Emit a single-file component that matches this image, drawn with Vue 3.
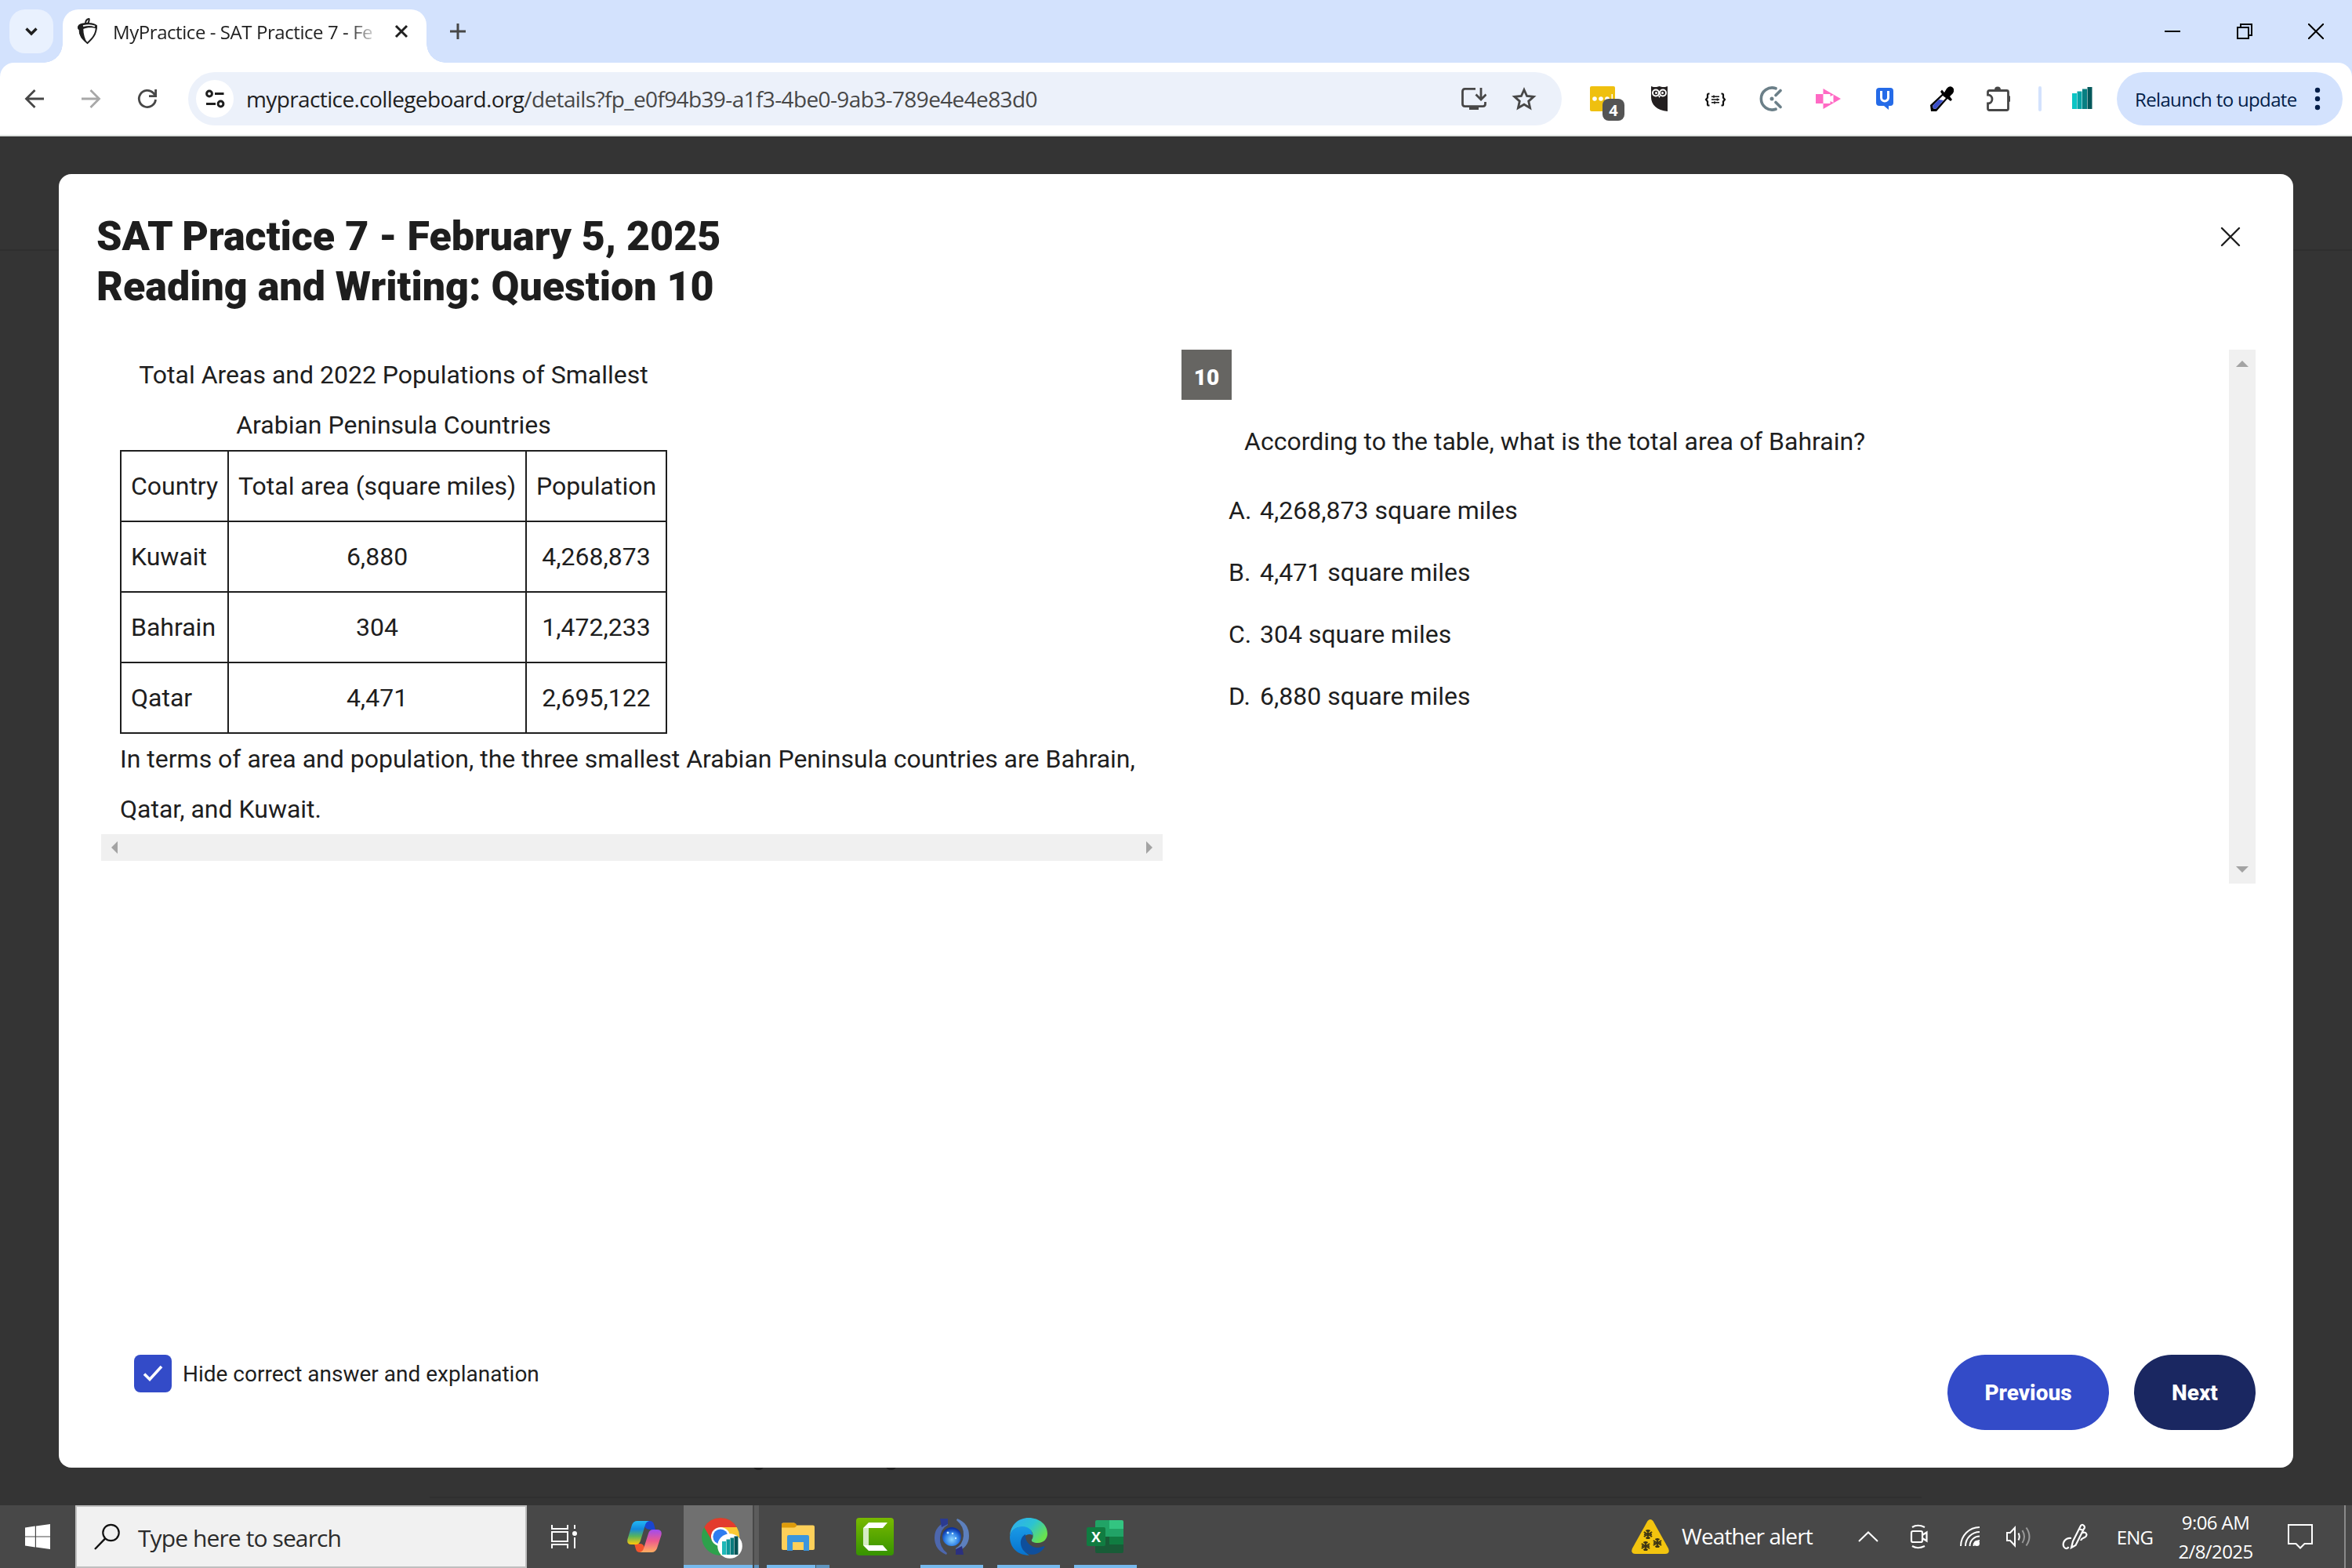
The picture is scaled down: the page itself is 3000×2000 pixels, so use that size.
<script setup>
const rows = [
  ['Country', 'Total area (square miles)', 'Population'],
  ['Kuwait', '6,880', '4,268,873'],
  ['Bahrain', '304', '1,472,233'],
  ['Qatar', '4,471', '2,695,122'],
]
const options = [
  ['A.', '4,268,873 square miles'],
  ['B.', '4,471 square miles'],
  ['C.', '304 square miles'],
  ['D.', '6,880 square miles'],
]
</script>

<template>
  <div class="screen">
    <header class="tabstrip">
      <button class="tab-search">
        <svg width="20" height="20" viewBox="0 0 20 20"><path d="M3.5 6.5 10 13l6.500-6.500" fill="none" stroke="#1f1f1f" stroke-width="3.400" /></svg>
      </button>
      <div class="tab">
        <svg class="favicon" width="28" height="34" viewBox="0 0 28 34">
          <path d="M11.500 7.500C10.500 4 12.500 1.500 15.500 1c1 2.500-.5 4.500-2 6.800M3.500 14.500c0 9 4.500 12.500 10 17.500 6-5.500 11.500-11 11.500-22-3.500-3.400-17.500-4.200-22-.5-2 3-.5 4.500.5 5z" fill="none" stroke="#1e1e1e" stroke-width="2" />
          <path d="M2 9.500c5-4 17-4 23 0 1 2 1 3 .3 4.200-6-2.200-13-1.500-17 .3 0 6.500 2 12.500 4.600 17.500C6 26.500 3 22 3 15 .8 13.500.8 11.500 2 9.500z" fill="#1e1e1e" />
          <path d="M8 10.200c5-1.400 11-1.300 15 .4" fill="none" stroke="#fff" stroke-width="1.800" />
        </svg>
        <span class="tab-title">MyPractice - SAT Practice 7 - Fe</span>
        <svg class="tab-close" width="20" height="20" viewBox="0 0 20 20"><path d="m3 3 14 14M17 3 3 17" stroke="#1f1f1f" stroke-width="3" /></svg>
      </div>
      <svg class="new-tab" width="20" height="20" viewBox="0 0 20 20"><path d="M10 0v20M0 10h20" stroke="#474747" stroke-width="3" /></svg>
      <div class="win-controls">
        <span><svg width="20" height="20" viewBox="0 0 20 20"><path d="M0 10h20" stroke="#000" stroke-width="2" /></svg></span>
        <span><svg width="20" height="20" viewBox="0 0 20 20"><path d="M1 5h14v14H1zM5 5V1h14v14h-4" fill="none" stroke="#000" stroke-width="2" /></svg></span>
        <span><svg width="20" height="20" viewBox="0 0 20 20"><path d="m0 0 20 20M20 0 0 20" stroke="#000" stroke-width="2" /></svg></span>
      </div>
    </header>

    <div class="toolbar-wrap">
      <div class="toolbar">
        <nav class="nav-buttons">
          <svg width="32" height="32" viewBox="0 0 32 32"><path d="M28 16H6M16.500 5 5.500 16l11 11" fill="none" stroke="#474747" stroke-width="2.800" /></svg>
          <svg width="32" height="32" viewBox="0 0 32 32"><path d="M4 16h22M15.500 5l11 11-11 11" fill="none" stroke="#a8a8a8" stroke-width="2.800" /></svg>
          <svg width="32" height="32" viewBox="0 0 32 32"><path d="M26.500 17A10.600 10.600 0 1 1 23.500 8.500l3 3.500" fill="none" stroke="#474747" stroke-width="2.800" /><path d="M26.600 4v8.600H18" fill="none" stroke="#474747" stroke-width="2.800" /></svg>
        </nav>
        <div class="omnibox">
          <span class="site-info">
            <svg width="28" height="26" viewBox="0 0 28 26"><g fill="none" stroke="#1f1f1f" stroke-width="3"><circle cx="7" cy="6.500" r="3.400" /><circle cx="21.500" cy="19.500" r="3.400" /><path d="M14 6.500h11.500M3 19.500h12" /></g></svg>
          </span>
          <span class="url"><b>mypractice.collegeboard.org</b>/details?fp_e0f94b39-a1f3-4be0-9ab3-789e4e4e83d0</span>
          <svg width="32" height="32" viewBox="0 0 32 32"><path d="M18 3.400H4.500c-2 0-3 1-3 3v16.200c0 2 1 3 3 3h23c2 0 3-1 3-3V20M25 2v14M18.500 10.500 25 17l6.500-6.500" fill="none" stroke="#474747" stroke-width="2.800" /><path d="M10 25h12v5H10z" fill="#474747" /></svg>
          <svg class="star" width="32" height="32" viewBox="0 0 32 32"><path d="m16 4.500 3.600 8 8.600.8-6.500 5.800 1.900 8.500L16 23.200l-7.600 4.400 1.900-8.500-6.500-5.800 8.600-.8z" fill="none" stroke="#474747" stroke-width="2.800" /></svg>
        </div>
        <div class="extensions">
          <span class="notes">
            <svg width="32" height="32" viewBox="0 0 32 32"><path d="M2 0h28a2 2 0 0 1 2 2v18L20 32H2a2 2 0 0 1-2-2V2a2 2 0 0 1 2-2z" fill="#efc00f" /><g fill="#fff"><circle cx="6" cy="16" r="2.800" /><circle cx="14" cy="16" r="2.800" /><circle cx="22" cy="16" r="2.800" /><path d="M27.500 10h1.500v10h-1.500z" /></g></svg>
            <em>4</em>
          </span>
          <svg width="32" height="32" viewBox="0 0 32 32"><path d="M6 0l3 1h4l3.500-1L20 1h4l3-1v32C13 31 6 23 6 14z" fill="#231f20" /><g fill="#231f20" stroke="#fff" stroke-width="2"><circle cx="12" cy="8.500" r="4" /><circle cx="21" cy="8.500" r="4" /></g><g fill="#fff"><circle cx="12.500" cy="8.500" r="1.500" /><circle cx="20.500" cy="8.500" r="1.500" /><path d="m15 12 1.500 3 1.500-3z" /></g></svg>
          <svg width="32" height="32" viewBox="0 0 32 32"><path d="M8.500 9.500H7.500Q6 9.500 6 11v3.500L4 17l2 2.500V23q0 1.500 1.500 1.500h1M23.500 9.500h1q1.500 0 1.500 1.500v3.500l2 2.500-2 2.500V23q0 1.500-1.500 1.500h-1" fill="none" stroke="#111" stroke-width="2.200" /><path d="M11 13.200h10M11 17h10M11 20.800h10M14 11.600v3.200M18.500 15.400v3.200M15 19.200v3.200" fill="none" stroke="#111" stroke-width="1.500" /></svg>
          <svg width="32" height="32" viewBox="0 0 32 32"><g fill="none" stroke="#6b7f88" stroke-width="3.600" stroke-linecap="round"><path d="M21 2.800A14 14 0 1 0 21 29.200M21 11.500l6-6M21 20.500l6 6" /></g><circle cx="16" cy="16" r="2.500" fill="#6b7f88" /></svg>
          <svg width="32" height="32" viewBox="0 0 32 32"><path d="M0 10h9.500V3L32 16 9.500 29v-7H0z" fill="#ff69c4" /><path d="M9.500 10h9v3l4-2v10l-4-2v3h-9z" fill="#fff" /></svg>
          <svg width="32" height="32" viewBox="0 0 32 32"><path d="M9 2h14q4 0 4 4v15q0 4-4 4h-2v5l-6-5H9q-4 0-4-4V6q0-4 4-4z" fill="#256be8" /><path d="M11.500 6v8.500a4.500 4.500 0 0 0 9 0V6" fill="none" stroke="#fff" stroke-width="3" /></svg>
          <svg width="32" height="32" viewBox="0 0 32 32"><path d="M17 4.500 20 8l3-5q3-4 7-2 4 3 1 8l-4 4 3 4-2 2-4-3-14 16H3l-1-8L17 10l-2-3z" fill="#000" /><path d="m18 12 4 3L9 29l-3-.5L5 25z" fill="#fff" /><path d="m13 17 6 1L9 29l-3-.5L5 25z" fill="#3b4fc9" /></svg>
          <svg width="32" height="32" viewBox="0 0 32 32"><path d="M12 6V4.500a4 4 0 0 1 8 0V6h-8zM29 12h.5a4 4 0 0 1 0 8H29z" fill="#474747" /><path d="M5.500 5.500h22q2 0 2 2v21q0 2-2 2h-22q-2 0-2-2v-6.500a5.500 5.500 0 0 0 0-11V7.500q0-2 2-2z" fill="none" stroke="#474747" stroke-width="2.800" /></svg>
        </div>
        <i class="divider"></i>
        <svg class="bars" width="32" height="32" viewBox="0 0 32 32"><path d="M3 9h6v20H3z" fill="#0cc5c5" /><path d="M9.500 6.500h6V29h-6z" fill="#08a3a6" /><path d="M16 3.500h6V29h-6z" fill="#077f82" /><path d="M22.500 1h6v28h-6z" fill="#05585b" /></svg>
        <button class="relaunch">
          <span>Relaunch to update</span>
          <svg width="8" height="30" viewBox="0 0 8 30"><g fill="#041e49"><circle cx="4" cy="4" r="3.200" /><circle cx="4" cy="15" r="3.200" /><circle cx="4" cy="26" r="3.200" /></g></svg>
        </button>
      </div>
    </div>

    <main class="page">
      <i class="rule rule-top"></i>
      <i class="rule rule-bottom"></i>
      <section class="modal">
        <header class="modal-head">
          <h1>SAT Practice 7 - February 5, 2025<br />Reading and Writing: Question 10</h1>
          <svg width="26" height="26" viewBox="0 0 26 26"><path d="m2 2 22 22M24 2 2 24" stroke="#1e1e1e" stroke-width="2.400" stroke-linecap="round" /></svg>
        </header>
        <div class="columns">
          <div class="passage">
            <div class="passage-body">
              <table>
                <caption>Total Areas and 2022 Populations of Smallest<br />Arabian Peninsula Countries</caption>
                <colgroup><col class="c1" /><col class="c2" /><col class="c3" /></colgroup>
                <tbody>
                  <tr v-for="r in rows" :key="r[0]"><td v-for="c in r" :key="c">{{ c }}</td></tr>
                </tbody>
              </table>
              <p>In terms of area and population, the three smallest Arabian Peninsula countries are Bahrain, Qatar, and Kuwait.</p>
            </div>
            <div class="hscroll">
              <svg width="8" height="16" viewBox="0 0 8 16"><path d="M8 0v16L0 8z" fill="#a3a3a3" /></svg>
              <svg width="8" height="16" viewBox="0 0 8 16"><path d="M0 0v16l8-8z" fill="#a3a3a3" /></svg>
            </div>
          </div>
          <div class="question">
            <div class="question-body">
              <span class="number">10</span>
              <p class="stem">According to the table, what is the total area of Bahrain?</p>
              <ol>
                <li v-for="o in options" :key="o[0]"><span>{{ o[0] }}</span>{{ o[1] }}</li>
              </ol>
            </div>
            <div class="vscroll">
              <svg width="16" height="8" viewBox="0 0 16 8"><path d="M0 8h16L8 0z" fill="#a3a3a3" /></svg>
              <svg width="16" height="8" viewBox="0 0 16 8"><path d="M0 0h16L8 8z" fill="#a3a3a3" /></svg>
            </div>
          </div>
        </div>
        <footer class="modal-foot">
          <label class="hide-answer">
            <span class="checkbox"><svg width="28" height="24" viewBox="0 0 28 24"><path d="m3 12.500 7 7L25 3" fill="none" stroke="#fff" stroke-width="3.600" /></svg></span>
            Hide correct answer and explanation
          </label>
          <div class="actions">
            <button class="btn prev">Previous</button>
            <button class="btn next">Next</button>
          </div>
        </footer>
      </section>
      <i class="peek peek-a"></i>
      <i class="peek peek-b"></i>
    </main>

    <footer class="taskbar">
      <div class="start">
        <svg width="32" height="32" viewBox="0 0 32 32"><path d="M0 4.500 12.800 2.600v12.800H0zM14 2.400 32 0v15.400H14zM0 16.600h12.800v12.800L0 27.500zM14 16.600h18V32l-18-2.400z" fill="#fff" /></svg>
      </div>
      <div class="search">
        <svg width="34" height="34" viewBox="0 0 34 34"><circle cx="21.500" cy="12" r="10.200" fill="none" stroke="#111" stroke-width="2.200" /><path d="M14.200 19.400 1 33" stroke="#111" stroke-width="2.400" /></svg>
        <span>Type here to search</span>
      </div>
      <div class="app taskview">
        <svg width="34" height="32" viewBox="0 0 34 32"><path d="M1 1v5h20V1M1 31v-5h20v5M1 10h20v12H1zM30 1v5M30 17v14" fill="none" stroke="#fff" stroke-width="2" /><circle cx="30" cy="12" r="3" fill="#fff" /></svg>
      </div>
      <div class="app copilot">
        <svg width="44" height="42" viewBox="0 0 44 42">
          <defs>
            <linearGradient id="cpA" x1="0" y1="0" x2="0" y2="1"><stop offset="0" stop-color="#22b8f5" /><stop offset=".35" stop-color="#1489dc" /><stop offset=".65" stop-color="#58b45c" /><stop offset="1" stop-color="#ffc80a" /></linearGradient>
            <linearGradient id="cpB" x1="0" y1="0" x2="0" y2="1"><stop offset="0" stop-color="#a04cf0" /><stop offset=".5" stop-color="#ee5a8c" /><stop offset="1" stop-color="#ffaf60" /></linearGradient>
          </defs>
          <path d="M22 1h7q3.500 0 5 4l2 7h-6q-6 0-8-4z" fill="#1a45cf" />
          <path d="M22 41h-6q-4 0-5-4l-2-7h7q5 0 6 5z" fill="#f2552c" />
          <path d="M13 1h15q-4 1-5 5l-6 20q-1.500 5-6 5H5q-6 0-4.500-7L6 6q2-5 7-5z" fill="url(#cpA)" />
          <path d="M31 41H16q4-1 5-5l6-19q1.500-5 6-5h5q7 0 5.500 7L38 36q-2 5-7 5z" fill="url(#cpB)" />
        </svg>
      </div>
      <div class="app chrome running">
        <svg width="54" height="54" viewBox="0 0 54 54">
          <circle cx="25" cy="25" r="24" fill="#2da14c" />
          <path d="M4.200 13A24 24 0 0 1 45.800 13H25L14.600 31z" fill="#e33b2e" />
          <path d="M45.800 13A24 24 0 0 1 25 49l10.400-18L25 13z" fill="#fcc934" />
          <circle cx="25" cy="25" r="12" fill="#fff" /><circle cx="25" cy="25" r="9.600" fill="#2f7df0" />
          <circle cx="37" cy="37" r="15.800" fill="#fff" />
          <path d="M27 31h5v17h-5z" fill="#1fb8b8" /><path d="M32.500 28.500h4.500V48h-4.500z" fill="#0d9a9c" /><path d="M37.500 26.500h4.500V48h-4.500z" fill="#0a7a7d" /><path d="M42.500 24.500h5V48h-5z" fill="#075457" />
        </svg>
      </div>
      <i class="stack"></i>
      <div class="app explorer running">
        <svg width="44" height="36" viewBox="0 0 44 36"><path d="M1 2q0-1.500 2-1.500h14l3 3H41q2 0 2 2V33q0 2-2 2H3q-2 0-2-2z" fill="#fdd05a" /><path d="M3 .5h14q3 .5 3 3t-4 3H1V2q0-1.500 2-1.500z" fill="#de9b0b" /><path d="M8 36V18q0-2 2-2h24q2 0 2 2v18h-7V25H15v11z" fill="#3b96dd" /></svg>
      </div>
      <div class="app camtasia">
        <svg width="48" height="48" viewBox="0 0 48 48"><defs><linearGradient id="cam" x1="0" y1="0" x2="0" y2="1"><stop offset="0" stop-color="#78b900" /><stop offset="1" stop-color="#369300" /></linearGradient></defs><rect width="48" height="48" rx="4" fill="url(#cam)" /><path d="m9 13 7-7h24l-6 7H16v22h18l6 7H16l-7-7z" fill="#fff" /><path d="m9 13 7 0v22H9z" fill="#d6ecc4" /></svg>
      </div>
      <div class="app sync running">
        <svg width="48" height="48" viewBox="0 0 48 48"><defs><radialGradient id="orb" cx=".5" cy=".65" r=".6"><stop offset="0" stop-color="#8fd8ff" /><stop offset=".6" stop-color="#2f80e6" /><stop offset="1" stop-color="#0b2fa0" /></radialGradient></defs><circle cx="24" cy="24" r="12" fill="url(#orb)" /><path d="M19 4Q2 10 2 25q0 16 15 22l1-2Q8 37 9 25 10 14 19 9z" fill="#4d67ad" /><path d="M29 44q17-6 17-21Q46 7 31 1l-1 2q10 8 9 20-1 11-10 16z" fill="#5d80bd" /><path d="M9 1h10v7l-8 4z" fill="#2b3a90" /><path d="M39 47H29v-7l8-4z" fill="#2b3080" /><circle cx="19" cy="19" r="1.500" fill="#c8ecff" /><circle cx="25" cy="20" r="1.300" fill="#c8ecff" /><circle cx="29" cy="26" r="1.200" fill="#c8ecff" /></svg>
      </div>
      <div class="app edge running">
        <svg width="48" height="48" viewBox="0 0 48 48">
          <defs>
            <linearGradient id="ed1" x1="0" y1="0" x2="1" y2=".6"><stop offset="0" stop-color="#2fa8f5" /><stop offset=".55" stop-color="#2cc3d2" /><stop offset="1" stop-color="#69e24e" /></linearGradient>
            <linearGradient id="ed2" x1="0" y1="0" x2="0" y2="1"><stop offset="0" stop-color="#1a9be6" /><stop offset="1" stop-color="#0572cf" /></linearGradient>
          </defs>
          <path d="M0 23C1 9 11 0 24 0c14 0 24 9 24 20 0 7-5 12-12 12-6 0-9-2-8-4 4-5 1-15-10-16C8 11 2 16 0 23z" fill="url(#ed1)" />
          <path d="M0 24c1-8 8-13 16-13 9 0 13 6 13 11-6-3-14 2-14 10 0 7 4 12 10 15.800C10 48 0 38 0 24z" fill="url(#ed2)" />
          <path d="M20 21c-8 4-8 16-1 22 8 7 19 4 25-5 1-1.500 0-2-1.500-1.400C32 41 19 34 20 21z" fill="#0f4f9c" />
        </svg>
      </div>
      <div class="app excel running">
        <svg width="48" height="44" viewBox="0 0 48 44"><path d="M11 3q0-2 2-2h16v21H11z" fill="#21a366" /><path d="M29 1h16q2 0 2 2v9H29z" fill="#33c481" /><path d="M29 12h18v10H29z" fill="#21a366" /><path d="M11 22h18v10H11z" fill="#185c37" /><path d="M29 22h18v10H29z" fill="#107c41" /><path d="M11 32h36v9q0 2-2 2H13q-2 0-2-2z" fill="#185c37" /><rect y="10" width="24" height="24" rx="2" fill="#107c41" /><text x="12" y="28.500" text-anchor="middle" font-family="Open Sans, sans-serif" font-weight="700" font-size="18" fill="#fff">X</text></svg>
      </div>

      <div class="tray">
        <svg class="alert" width="48" height="46" viewBox="0 0 48 46">
          <path d="M20.500 3q3.500-4 7 0L47 38q2.500 7-4 7H5q-6.500 0-4-7z" fill="#f2c40f" />
          <g stroke="#3c3414" stroke-width="1.800">
            <path id="flake" d="M21 14v12M15.800 17l10.400 6M26.200 17l-10.400 6M18.500 14.800l2.500 2 2.500-2M18.500 25.200l2.500-2 2.500 2M16 20.500l1.500-.5-.8-2.500M26 20.500l-1.500-.5.8-2.500" fill="none" />
            <use href="#flake" x="12" y="11" /><use href="#flake" x="-3" y="15" />
          </g>
        </svg>
        <span class="weather">Weather alert</span>
        <span class="cell w66"><svg width="26" height="14" viewBox="0 0 26 14"><path d="M1 13 13 1.500 25 13" fill="none" stroke="#fff" stroke-width="2" /></svg></span>
        <span class="cell w64"><svg width="26" height="32" viewBox="0 0 26 32"><path d="M5 9h10q2 0 2 2v10q0 2-2 2H5q-2 0-2-2V11q0-2 2-2zM17 14l5.500-3.500v11L17 18M4 4q7-4.500 16 0M4 28q7 4.500 16 0" fill="none" stroke="#fff" stroke-width="2.200" /></svg></span>
        <span class="cell w65"><svg width="26" height="28" viewBox="0 0 26 28"><path d="M1 26A24 24 0 0 1 25 2M7 26A18 18 0 0 1 25 8M12.500 26A12.500 12.500 0 0 1 25 13.500" fill="none" stroke="#fff" stroke-width="2" /><circle cx="21.500" cy="22.500" r="3.500" fill="#fff" /><path d="M17.500 26q-.5-6 7.500-7" fill="none" stroke="#fff" stroke-width="2" /></svg></span>
        <span class="cell w60"><svg width="34" height="30" viewBox="0 0 34 30"><path d="M2 10h4l6-6.500v23L6 20H2zM16.500 10.500q2.500 4.500 0 9" fill="none" stroke="#fff" stroke-width="2" /><path d="M21.500 7q5 8 0 16M26.500 3.500q8 11.500 0 23" fill="none" stroke="#999" stroke-width="2" /></svg></span>
        <span class="cell w84"><svg width="34" height="34" viewBox="0 0 34 34"><path d="m12 31 2-8L24 3q2-2.500 4 0t0 4L17.500 28zM22 7l5 2M12 19c-8-1-12 6-9.500 11 2 3 5 2.500 6 0M26 12c6-2 7 4 3 6-2 1-4 1-5 4" fill="none" stroke="#fff" stroke-width="2.200" /></svg></span>
        <span class="cell w68 lang">ENG</span>
        <span class="clock"><span>9:06 AM</span><span>2/8/2025</span></span>
        <span class="cell w78"><svg width="32" height="32" viewBox="0 0 32 32"><path d="M1 1h30v24H21.500L16 30.500 10.500 25H1z" fill="none" stroke="#fff" stroke-width="2" /></svg></span>
        <i class="peek-desktop"></i>
      </div>
    </footer>
  </div>
</template>

<style>
body { margin: 0; }
</style>

<style scoped>
* { box-sizing: border-box; }
svg { display: block; flex: none; }
button { border: 0; margin: 0; padding: 0; font: inherit; color: inherit; }
.screen {
  width: 3000px; height: 2000px; overflow: hidden; display: flex; flex-direction: column;
  background: #343434; color: #1e1e1e; font-family: Roboto, "Liberation Sans", sans-serif;
}

.tabstrip {
  height: 80px; flex: none; display: flex; align-items: flex-start; padding: 12px 0 0 12px;
  background: #d3e2fd; font-family: "Open Sans", "Noto Sans", sans-serif;
}
.tab-search { width: 56px; height: 56px; border-radius: 20px; background: #e9f1fe; display: grid; place-items: center; }
.tab {
  position: relative; width: 464px; height: 68px; margin-left: 12px; padding: 0 22px 12px 18px;
  display: flex; align-items: center; background: #fff; border-radius: 20px 20px 0 0;
}
.tab::before, .tab::after { content: ""; position: absolute; bottom: 0; width: 24px; height: 24px; }
.tab::before { left: -24px; background: radial-gradient(circle at 0 0, transparent 23.500px, #fff 24px); }
.tab::after { right: -24px; background: radial-gradient(circle at 100% 0, transparent 23.500px, #fff 24px); }
.tab-title {
  width: 336px; margin: 2px 0 0 18px; white-space: nowrap; font-size: 24px; line-height: 40px;
  letter-spacing: -0.430px; color: transparent;
  background: linear-gradient(90deg, #1f1f1f 300px, rgba(31, 31, 31, 0.15) 334px);
  background-clip: text; -webkit-background-clip: text;
}
.tab-close { margin-left: auto; }
.new-tab { margin: 18px 0 0 30px; }
.win-controls { display: flex; margin: -12px 0 0 auto; }
.win-controls span { width: 91.500px; height: 80px; display: grid; place-items: center; }

.toolbar-wrap { height: 94px; flex: none; background: #d3e2fd; }
.toolbar {
  height: 94px; display: flex; align-items: center; padding: 0 12px 0 28px; background: #fff;
  border-bottom: 2px solid #dfe3e0; border-radius: 18px 18px 0 0; font-family: "Open Sans", "Noto Sans", sans-serif;
}
.nav-buttons, .extensions { display: flex; gap: 40px; }
.omnibox {
  width: 1752px; height: 68px; margin: 0 36px; padding: 0 32px 0 10px; display: flex; align-items: center;
  border-radius: 34px; background: #ecf1fa;
}
.site-info { width: 48px; height: 48px; border-radius: 50%; background: #fff; display: grid; place-items: center; }
.url { flex: 1; margin-left: 16px; font-size: 28px; line-height: 40px; letter-spacing: -0.620px; color: #474747; white-space: nowrap; }
.url b { font-weight: 400; color: #1f1f1f; }
.star { margin-left: 32px; }
.notes { position: relative; }
.notes em {
  position: absolute; left: 16px; top: 16px; width: 28px; height: 28px; border-radius: 8px; background: #545454;
  color: #fff; font: 700 20px/30px "Open Sans", sans-serif; text-align: center;
}
.divider { width: 4px; height: 32px; margin: 0 36px; border-radius: 2px; background: #d3e2fd; }
.relaunch {
  width: 288px; height: 68px; margin-left: auto; padding: 0 28px 0 23px; border-radius: 34px; background: #d3e2fd;
  display: flex; align-items: center; justify-content: space-between; font-size: 24px; letter-spacing: -0.650px;
  color: #041e49; white-space: nowrap;
}

.page { position: relative; flex: 1; padding: 48px 75px; display: flex; }
.rule { position: absolute; height: 2px; background: #2f2f2f; }
.rule-top { left: 0; right: 0; top: 144px; }
.rule-bottom { left: 548px; right: 549px; top: 1735px; }
.peek { position: absolute; top: 1692px; width: 13px; height: 9px; border-radius: 50%; background: #1e1e1e; z-index: 0; }
.peek-a { left: 961px; }
.peek-b { left: 1130px; }
.modal {
  position: relative; z-index: 1; flex: 1; display: flex; flex-direction: column; padding: 48px;
  background: #fff; border-radius: 16px;
}
.modal-head { display: flex; justify-content: space-between; height: 176px; padding-right: 19px; }
.modal-head svg { margin-top: 19px; }
h1 { margin: 0; font-size: 52px; line-height: 64px; font-weight: 900; white-space: nowrap; }
.columns { display: flex; align-items: flex-start; padding-left: 6px; font-size: 32px; line-height: 64px; }
.passage { width: 1354px; }
.passage-body { padding-left: 24px; }
table { width: 697px; border-collapse: collapse; table-layout: fixed; }
caption { text-align: center; }
.c1 { width: 137px; }
.c2 { width: 380px; }
.c3 { width: 179px; }
td { height: 90px; padding: 12px 0; border: 2px solid #1e1e1e; text-align: center; white-space: nowrap; }
td:first-child { padding-left: 12px; text-align: left; }
.passage p { margin: 0; width: 1320px; }
.hscroll {
  height: 34px; padding: 0 13px; display: flex; align-items: center; justify-content: space-between; background: #f0f0f0;
}
.question { width: 1370px; height: 681px; margin-left: 24px; display: flex; justify-content: space-between; }
.number {
  display: block; width: 64px; height: 64px; padding-top: 4px; background: #666562; color: #fff; text-align: center;
  font-size: 28px; font-weight: 900; line-height: 64px;
}
.stem { margin: 21px 0 24px 80px; }
ol { list-style: none; margin: 0; padding: 0 0 0 60px; display: flex; flex-direction: column; gap: 15px; }
li { display: flex; }
li span { width: 40px; }
.vscroll {
  width: 34px; padding: 14px 0; display: flex; flex-direction: column; align-items: center;
  justify-content: space-between; background: #f0f0f0;
}
.modal-foot { margin-top: auto; display: flex; justify-content: space-between; align-items: flex-start; padding-left: 48px; }
.hide-answer { display: flex; align-items: center; gap: 14px; font-size: 28px; height: 48px; }
.checkbox { width: 48px; height: 48px; border-radius: 8px; background: #334bc8; display: grid; place-items: center; }
.actions { display: flex; gap: 32px; }
.btn { height: 96px; border-radius: 48px; color: #fff; font-size: 28px; font-weight: 800; }
.prev { width: 206px; background: #334bc8; }
.next { width: 155px; background: #1a2761; }

.taskbar {
  height: 80px; flex: none; display: flex; align-items: stretch; background: #484848; color: #fff;
  font-family: "Open Sans", "Noto Sans", sans-serif; white-space: nowrap;
}
.start { width: 96px; display: grid; place-items: center; }
.search {
  width: 576px; display: flex; align-items: center; padding-left: 22px; background: #f1f1f1;
  border: 2px solid #bfbfbf; color: #2b2b2b; font-size: 30px; letter-spacing: -0.900px;
}
.search span { margin: 3px 0 0 22px; }
.app { width: 80px; margin-right: 18px; display: grid; place-items: center; }
.running { border-bottom: 4px solid #76b9ed; padding-top: 4px; }
.app.taskview { width: 96px; margin: 0; }
.app.copilot { width: 104px; margin: 0; padding-left: 4px; }
.app.chrome { width: 88px; margin: 0; padding: 8px 0 0 10px; background: #707070; }
.stack { width: 6px; margin: 0 10px 0 2px; background: #5c5c5c; border-bottom: 4px solid #5f94be; }
.app.explorer {
  border-bottom: 0; padding: 0;
  background: linear-gradient(90deg, #76b9ed 62px, #48545e 62px, #48545e 63px, #5f94be 63px) bottom / 100% 4px no-repeat;
}

.tray { margin-left: auto; display: flex; align-items: center; }
.weather { width: 221px; padding: 0 0 2px 16px; font-size: 28px; letter-spacing: -0.900px; }
.cell { display: grid; place-items: center; }
.w66 { width: 66px; }
.w64 { width: 64px; }
.w65 { width: 65px; }
.w60 { width: 60px; }
.w84 { width: 84px; }
.w68 { width: 68px; }
.w78 { width: 78px; }
.lang { font-size: 24px; letter-spacing: -0.800px; }
.clock { width: 138px; display: flex; flex-direction: column; align-items: center; font-size: 24px; line-height: 37px; letter-spacing: -0.600px; }
.peek-desktop { width: 2px; height: 80px; margin: 0 8px 0 17px; background: #8a8a8a; }
</style>
